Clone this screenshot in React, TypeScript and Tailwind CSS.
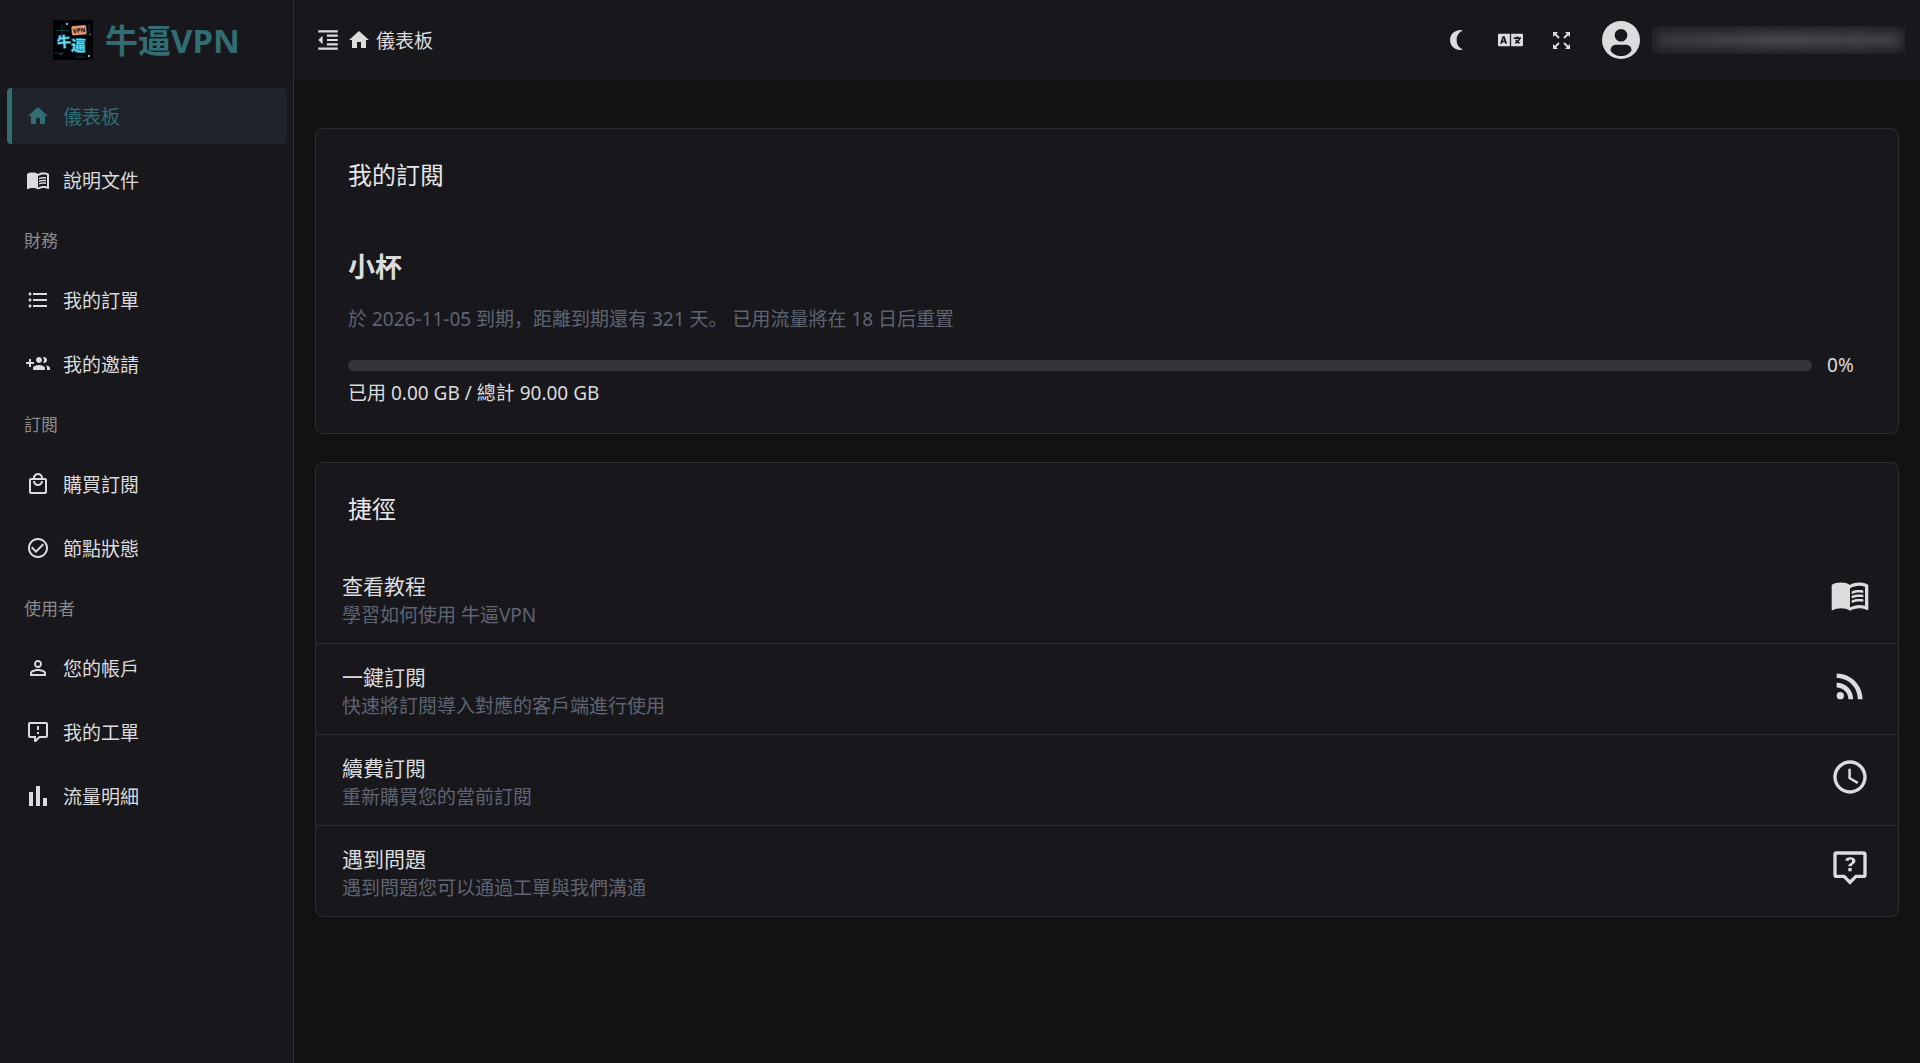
import React, { useState } from 'react';
import type { IconType } from 'react-icons';
import {
  MdHome,
  MdMenuBook,
  MdFormatListBulleted,
  MdOutlineLocalMall,
  MdCheckCircleOutline,
  MdPersonOutline,
  MdFormatIndentDecrease,
  MdRssFeed,
  MdAccessTime,
} from 'react-icons/md';
import { FaLanguage } from 'react-icons/fa';

type IconProps = { size?: number | string; className?: string };

const InviteIcon = ({ size = 24, className }: IconProps) => (
  <svg width={size} height={size} viewBox="0 0 24 24" fill="currentColor" className={className}>
    <path d="M8 10H5V7H3v3H0v2h3v3h2v-3h3v-2zm10 1c1.66 0 2.99-1.34 2.99-3S19.660 5 18 5c-.32 0-.63.05-.91.14.57.81.9 1.790.9 2.860s-.34 2.040-.9 2.860c.28.09.59.14.91.14zm-5 0c1.660 0 2.990-1.340 2.990-3S14.660 5 13 5c-1.660 0-3 1.340-3 3s1.340 3 3 3zm6.620 2.160c.83.73 1.380 1.660 1.380 2.840v2h3v-2c0-1.540-2.370-2.490-4.380-2.840zM13 13c-2 0-6 1-6 3v1a1 1 0 0 0 1 1h10a1 1 0 0 0 1-1v-1c0-2-4-3-6-3z" />
  </svg>
);

const TicketIcon = ({ size = 24, className }: IconProps) => (
  <svg width={size} height={size} viewBox="0 0 24 24" fill="currentColor" className={className}>
    <path d="M9 22a1 1 0 0 1-1-1v-3H4a2 2 0 0 1-2-2V4c0-1.11.9-2 2-2h16a2 2 0 0 1 2 2v12a2 2 0 0 1-2 2h-6.1l-3.7 3.71c-.2.19-.45.29-.7.29H9m1-6v3.08L13.08 16H20V4H4v12h6m3-6h-2V6h2v4m0 4h-2v-2h2v2z" />
  </svg>
);

const TrafficIcon = ({ size = 24, className }: IconProps) => (
  <svg width={size} height={size} viewBox="0 0 24 24" fill="currentColor" className={className}>
    <path d="M3 22V8h4v14H3m7 0V2h4v20h-4m7 0v-8h4v8h-4z" />
  </svg>
);

const HelpIcon = ({ size = 24, className }: IconProps) => (
  <svg width={size} height={size} viewBox="0 0 24 24" fill="currentColor" className={className}>
    <path d="M4 2h16a2 2 0 0 1 2 2v12a2 2 0 0 1-2 2h-4l-4 4-4-4H4a2 2 0 0 1-2-2V4a2 2 0 0 1 2-2m0 2v12h4.83L12 19.17 15.17 16H20V4H4m8.19 1.5c-.89 0-1.6.18-2.14.54-.55.36-.83.96-.78 1.65h1.97c0-.28.1-.49.26-.63.2-.14.42-.21.69-.21.31 0 .58.08.76.26.18.17.27.39.27.69 0 .28-.08.53-.22.74-.17.22-.38.4-.64.54-.52.32-.86.6-1.07.84-.19.24-.29.58-.29 1.08h2c0-.28.05-.5.14-.68.09-.17.26-.32.52-.47.46-.21.84-.49 1.13-.85.29-.37.44-.76.44-1.2 0-.7-.27-1.26-.81-1.68-.54-.41-1.29-.62-2.23-.62M11 12v2h2v-2h-2z" />
  </svg>
);

const MoonIcon = () => (
  <svg width="13" height="20" viewBox="0 0 13 20" fill="currentColor">
    <path d="M13 .46A10 10 0 1 0 13 19.54A10.3 10.3 0 0 1 13 .46z" />
  </svg>
);

const FullscreenIcon = () => (
  <svg width="17" height="17" viewBox="0 0 17 17" fill="currentColor" stroke="currentColor" strokeWidth="1.9">
    {[0, 90, 180, 270].map((angle) => (
      <g key={angle} transform={`rotate(${angle} 8.5 8.5)`}>
        <path d="M0 0h5L0 5z" stroke="none" />
        <path d="M1.5 1.5L6 6" />
      </g>
    ))}
  </svg>
);

const AvatarIcon = () => (
  <svg width="38" height="38" viewBox="0 0 38 38">
    <circle cx="19" cy="19" r="19" fill="#dcdcde" />
    <circle cx="19" cy="14.3" r="6.3" fill="#18181c" />
    <path d="M8.5 29.5C8.5 26 11 23.8 14 23.8h10c3 0 5.500 2.200 5.500 5.700C27.500 33 23.500 35 19 35S10.500 33 8.500 29.500z" fill="#18181c" />
  </svg>
);

const Logo = () => (
  <svg width="40" height="40" viewBox="0 0 40 40" className="shrink-0" aria-label="牛逼VPN">
    <rect width="40" height="40" fill="#020307" />
    <g stroke="#17505e" strokeWidth=".7">
      <path d="M3 10.500h13M9 5v11M1 33h10M33 15h6M36 4v8M22 37h10" />
    </g>
    <g fill="#b9e9f2">
      <circle cx="14" cy="4" r="1" />
      <circle cx="36" cy="36" r="1" />
      <circle cx="8" cy="34" r=".6" />
      <circle cx="37" cy="14" r=".6" />
    </g>
    <g fontFamily="'Noto Sans CJK SC', sans-serif" fontWeight="900" fill="#6fdcea" stroke="#1a9fc0" strokeWidth=".5">
      <text x="4" y="27" fontSize="14" transform="rotate(-5 11 22)">牛</text>
      <text x="18" y="31" fontSize="15" transform="rotate(3 25 26)">逼</text>
    </g>
    <g transform="rotate(-5 26 10)">
      <rect x="19" y="6" width="14" height="8.500" rx="1" fill="#e8906a" stroke="#f6c6a4" strokeWidth=".6" />
      <text x="26" y="12.600" fontSize="6" fontWeight="800" textAnchor="middle" fontFamily="'Noto Sans', sans-serif" fill="#2a1512">VPN</text>
    </g>
  </svg>
);

type NavItem = { label: string; icon: IconType | React.FC<IconProps> };

const navGroups: { title?: string; items: NavItem[] }[] = [
  {
    items: [
      { label: '儀表板', icon: MdHome },
      { label: '說明文件', icon: MdMenuBook },
    ],
  },
  {
    title: '財務',
    items: [
      { label: '我的訂單', icon: MdFormatListBulleted },
      { label: '我的邀請', icon: InviteIcon },
    ],
  },
  {
    title: '訂閱',
    items: [
      { label: '購買訂閱', icon: MdOutlineLocalMall },
      { label: '節點狀態', icon: MdCheckCircleOutline },
    ],
  },
  {
    title: '使用者',
    items: [
      { label: '您的帳戶', icon: MdPersonOutline },
      { label: '我的工單', icon: TicketIcon },
      { label: '流量明細', icon: TrafficIcon },
    ],
  },
];

const shortcuts = [
  { title: '查看教程', description: '學習如何使用 牛逼VPN', icon: MdMenuBook },
  { title: '一鍵訂閱', description: '快速將訂閱導入對應的客戶端進行使用', icon: MdRssFeed },
  { title: '續費訂閱', description: '重新購買您的當前訂閱', icon: MdAccessTime },
  { title: '遇到問題', description: '遇到問題您可以通過工單與我們溝通', icon: HelpIcon },
];

const Sidebar = ({ active, onSelect }: { active: string; onSelect: (label: string) => void }) => (
  <aside className="w-[294px] shrink-0 border-r border-[#2d2d30] bg-[#18181c]">
    <div className="flex h-20 items-center justify-center gap-3">
      <Logo />
      <span className="pt-0.5 text-[33px] leading-10 font-bold text-[#316d72]">牛逼VPN</span>
    </div>
    <nav className="flex flex-col gap-2 py-2 pr-1.5 pl-[7px]">
      {navGroups.map((group, index) => (
        <React.Fragment key={index}>
          {group.title && (
            <div className="flex h-12 items-center pt-0.5 pl-[17px] text-[17px] text-[#8b8b8e]">{group.title}</div>
          )}
          {group.items.map(({ label, icon: Icon }) => (
            <a
              key={label}
              href="#"
              onClick={() => onSelect(label)}
              className={
                active === label
                  ? 'flex h-14 items-center gap-[13px] rounded border-l-[5px] border-[#2f6d70] bg-[#1e242a] pl-3.5 text-[#316d72]'
                  : 'flex h-14 items-center gap-[13px] rounded border-l-[5px] border-transparent pl-3.5 text-[#dcdcde]'
              }
            >
              <Icon size={24} />
              <span className="pt-[3px]">{label}</span>
            </a>
          ))}
        </React.Fragment>
      ))}
    </nav>
  </aside>
);

const Header = () => (
  <header className="flex h-20 items-center justify-between bg-[#18181c] pr-[15px] pl-[21px]">
    <div className="flex items-center gap-1.5">
      <button type="button" aria-label="收合選單">
        <MdFormatIndentDecrease size={26} />
      </button>
      <a href="#" className="flex items-center gap-[5px]">
        <MdHome size={24} />
        <span className="pt-0.5">儀表板</span>
      </a>
    </div>
    <div className="flex items-center">
      <div className="flex items-center gap-[30px] pr-8">
        <button type="button" aria-label="深色模式" className="flex w-6 justify-center">
          <MoonIcon />
        </button>
        <button type="button" aria-label="語言">
          <FaLanguage className="h-5 w-[25px]" />
        </button>
        <button type="button" aria-label="全螢幕">
          <FullscreenIcon />
        </button>
      </div>
      <button type="button" aria-label="帳戶" className="flex items-center gap-3">
        <AvatarIcon />
        <span className="flex h-7 w-[253px] items-center overflow-hidden bg-[#1d1d21]">
          <span className="mx-1 h-4 w-full rounded bg-linear-to-r from-[#3a3a3d] via-[#4c4c4f] to-[#434346] blur-[6px]" />
        </span>
      </button>
    </div>
  </header>
);

const SubscriptionCard = () => {
  const percent = 0;
  return (
    <section className="rounded-lg border border-[#2d2d30] bg-[#18181c] px-8 pt-7 pb-[26px]">
      <h2 className="text-[24px] leading-9 text-[#e6e6e8]">我的訂閱</h2>
      <h3 className="mt-14 text-[27px] leading-9 font-bold">小杯</h3>
      <p className="mt-5 leading-7 text-[#5f6472]">
        於 2026-11-05 到期，距離到期還有 321 天。 已用流量將在 18 日后重置
      </p>
      <div className="mt-[18px] flex items-center gap-[15px] pr-[7px]">
        <div role="progressbar" aria-valuenow={percent} className="h-[11px] flex-1 overflow-hidden rounded-full bg-[#353539]">
          <div className="h-full rounded-full bg-[#316d72]" style={{ width: `${percent}%` }} />
        </div>
        <span className="w-8 leading-7">{percent}%</span>
      </div>
      <div className="leading-7">已用 0.00 GB / 總計 90.00 GB</div>
    </section>
  );
};

const ShortcutCard = () => (
  <section className="overflow-hidden rounded-lg border border-[#2d2d30] bg-[#18181c]">
    <h2 className="px-8 pt-7 pb-[26px] text-[24px] leading-9 text-[#e6e6e8]">捷徑</h2>
    <div className="divide-y divide-[#2d2d30]">
      {shortcuts.map(({ title, description, icon: Icon }) => (
        <a key={title} href="#" className="flex items-center justify-between pt-[17px] pr-7 pb-[15px] pl-[26px]">
          <div>
            <div className="text-[21px] leading-8">{title}</div>
            <div className="leading-[26px] text-[#5f6472]">{description}</div>
          </div>
          <Icon size={40} className="mb-2" />
        </a>
      ))}
    </div>
  </section>
);

export default function App() {
  const [active, setActive] = useState('儀表板');

  return (
    <div className="flex min-h-screen bg-[#121212] font-['Noto_Sans','Noto_Sans_CJK_SC',sans-serif] text-[19px] text-[#dcdcde]">
      <Sidebar active={active} onSelect={setActive} />
      <div className="min-w-0 flex-1">
        <Header />
        <main className="flex flex-col gap-7 px-[21px] pt-12 pb-6">
          <SubscriptionCard />
          <ShortcutCard />
        </main>
      </div>
    </div>
  );
}
